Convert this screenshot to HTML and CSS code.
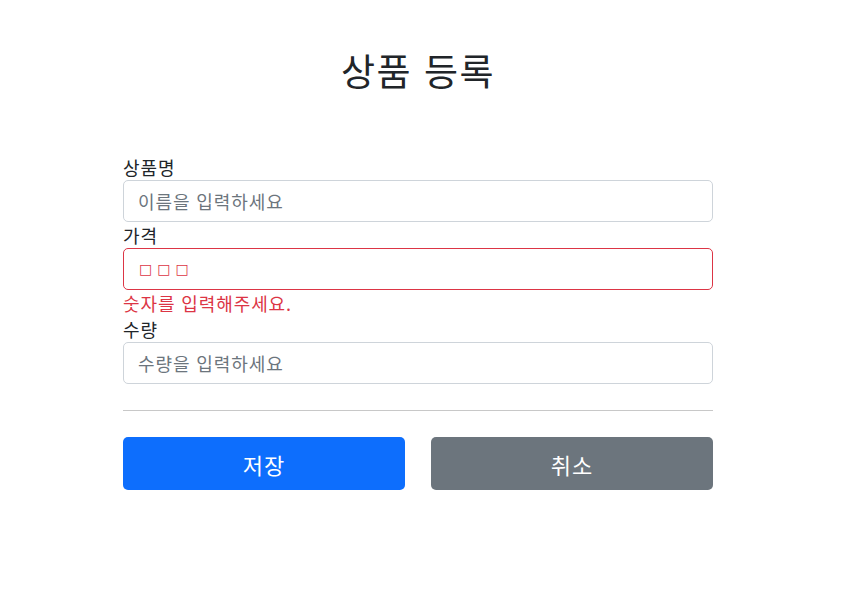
FILE: index.html
```html
<!DOCTYPE html>
<html lang="ko">
<head>
<meta charset="utf-8">
<title>상품 등록</title>
<link rel="stylesheet" href="styles.css">
</head>
<body>
<div class="container">
  <div class="page-header">
    <h2 class="page-title">상품 등록</h2>
  </div>
  <form class="item-form">
    <div class="field">
      <label class="field-label" for="itemName">상품명</label>
      <input class="field-input" id="itemName" type="text" placeholder="이름을 입력하세요">
    </div>
    <div class="field">
      <label class="field-label" for="price">가격</label>
      <input class="field-input field-error" id="price" type="text" value="□□□">
      <div class="field-error-msg">숫자를 입력해주세요.</div>
    </div>
    <div class="field">
      <label class="field-label" for="quantity">수량</label>
      <input class="field-input" id="quantity" type="text" placeholder="수량을 입력하세요">
    </div>
    <hr class="divider">
    <div class="actions">
      <button class="btn btn-primary" type="button">저장</button>
      <button class="btn btn-secondary" type="button">취소</button>
    </div>
  </form>
</div>
</body>
</html>
```
FILE: styles.css
```css
* { box-sizing: border-box; }
body {
  margin: 0;
  font-family: "Noto Sans CJK KR", "Noto Sans", sans-serif;
  font-size: 18px;
  line-height: 1.5;
  letter-spacing: 0.9px;
  color: #212529;
  background: #fff;
}
.container {
  width: 590px;
  margin-left: 123px;
}
.page-header {
  padding-top: 49px;
  text-align: center;
}
.page-title {
  margin: 0;
  font-size: 37px;
  font-weight: 400;
  line-height: 42px;
  letter-spacing: 1.5px;
}
.item-form {
  margin-top: 63px;
}
.field-label {
  display: block;
  line-height: 26px;
}
.field-input {
  display: block;
  width: 100%;
  height: 42px;
  padding: 0 14px;
  font-family: inherit;
  font-size: 18px;
  letter-spacing: 0.9px;
  color: #212529;
  background: #fff;
  border: 1px solid #ced4da;
  border-radius: 5px;
  outline: none;
}
.field-input::placeholder { color: #6c757d; }
.field-error {
  border-color: #dc3545;
  color: #dc3545;
  font-family: "DejaVu Sans", sans-serif;
  font-size: 14px;
  font-weight: 700;
  letter-spacing: 5px;
  padding-left: 15px;
}
.field-error-msg {
  color: #dc3545;
  line-height: 26px;
}
.divider {
  margin: 26px 0;
  border: 0;
  border-top: 1px solid #c8c8c8;
}
.actions {
  display: flex;
  gap: 26px;
}
.btn {
  flex: 1;
  height: 53px;
  border: 0;
  border-radius: 5px;
  font-family: inherit;
  font-size: 22px;
  letter-spacing: 1px;
  color: #fff;
  cursor: pointer;
}
.btn-primary { background: #0d6efd; }
.btn-secondary { background: #6c757d; }
```
